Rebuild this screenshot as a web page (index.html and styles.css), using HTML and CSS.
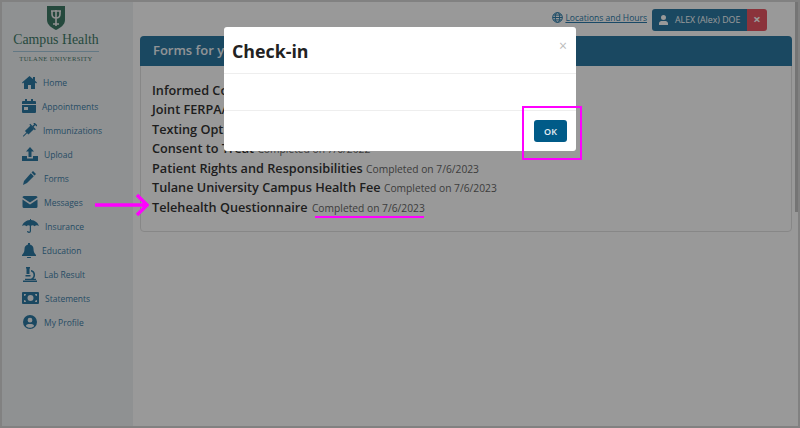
FILE: index.html
```html
<!DOCTYPE html>
<html lang="en">
<head>
    <meta charset="UTF-8">
    <title>Campus Health - Forms</title>
    <link rel="stylesheet" href="styles.css">
</head>
<body>
    <div class="page">
        <aside class="sidebar">
            <div class="logo">
                <svg class="shield" width="20" height="26" viewBox="0 0 20 26">
                    <path d="M1 1h18v14c0 5-5 8-9 10C6 23 1 20 1 15z" fill="#3e7b67"/>
                    <path d="M5 6h10M10 5v16M6 6v3c0 3 2 4 4 4s4-1 4-4V6M7 19h6" fill="none" stroke="#f2f2f2" stroke-width="1.6"/>
                </svg>
                <div class="logo-name">Campus Health</div>
                <div class="logo-sub">TULANE UNIVERSITY</div>
            </div>
            <nav class="menu">
                <a class="menu-item">
                    <svg width="15" height="13" viewBox="0 0 15 13"><path d="M7.5 0L0 6.5l.9 1L2 6.6V13h4V9h3v4h4V6.6l1.1.9.9-1-2-1.8V1h-2v2.1z"/></svg>
                    Home
                </a>
                <a class="menu-item">
                    <svg width="14" height="14" viewBox="0 0 14 14"><path d="M3 0h2v2h4V0h2v2h2a1 1 0 011 1v2H0V3a1 1 0 011-1h2zM0 6h14v7a1 1 0 01-1 1H1a1 1 0 01-1-1zm2 2v3h4V8z"/></svg>
                    Appointments
                </a>
                <a class="menu-item">
                    <svg width="15" height="14" viewBox="0 0 15 14"><g transform="rotate(45 7.5 7)"><rect x="5" y="3" width="5" height="8"/><rect x="3.600" y="2" width="7.800" height="1.300"/><rect x="6.800" y="-1" width="1.400" height="3.500"/><rect x="5" y="-1.800" width="5" height="1.300"/><rect x="7.100" y="10" width=".9" height="6"/></g></svg>
                    Immunizations
                </a>
                <a class="menu-item">
                    <svg width="16" height="14" viewBox="0 0 16 14"><path d="M8 0l4 4.500H9.500V10h-3V4.500H4zM0 9h5v2.500h6V9h5v5H0z"/></svg>
                    Upload
                </a>
                <a class="menu-item">
                    <svg width="16" height="14" viewBox="0 0 16 14"><path d="M11 0l3 3-1.500 1.500-3-3zM8.800 2.200l3 3L5 12l-4 2 1-4z"/></svg>
                    Forms
                </a>
                <a class="menu-item">
                    <svg width="16" height="12" viewBox="0 0 16 12"><path d="M2 0h12a1.500 1.500 0 011.500 1.500L8 6.500.5 1.500A1.500 1.500 0 012 0zM.5 3.500L8 8.500l7.500-5v7A1.500 1.500 0 0114 12H2a1.500 1.500 0 01-1.500-1.500z"/></svg>
                    Messages
                </a>
                <a class="menu-item">
                    <svg width="17" height="14" viewBox="0 0 17 14"><path d="M8 0h1v1c4 .2 7 3 8 6-1.500-1-3-1-4.500.2C11.500 6 10 6 9 6.800V12a2 2 0 01-4 0h1.200a.8.8 0 001.600 0V6.800C7 6 5.500 6 4.500 7.200 3 6 1.500 6 0 7c1-3 4-5.800 8-6z"/></svg>
                    Insurance
                </a>
                <a class="menu-item">
                    <svg width="14" height="15" viewBox="0 0 14 15"><path d="M6 0h2v1.500c2.500.5 3.500 2.500 3.500 4.500 0 3 1 4.500 2.500 6v1H0v-1c1.500-1.500 2.500-3 2.500-6 0-2 1-4 3.500-4.500zM5 14h4a2 2 0 01-4 0z"/></svg>
                    Education
                </a>
                <a class="menu-item">
                    <svg width="16" height="15" viewBox="0 0 16 15"><path d="M4 0h4v1.500H7.500V7h-3V1.500H4zM9 3c3 .5 4.500 3 4 6-.2 1-.7 2-1.500 2.800H14V13H3v-1.200h6c1.500-.8 2.500-2 2.500-3.800 0-1.800-1-3-2.500-3.400zM3.500 8h5v1.500h-5zM1 13.500h14V15H1z"/></svg>
                    Lab Result
                </a>
                <a class="menu-item">
                    <svg width="17" height="12" viewBox="0 0 17 12"><path fill-rule="evenodd" d="M1 0h15a1 1 0 011 1v10a1 1 0 01-1 1H1a1 1 0 01-1-1V1a1 1 0 011-1zm7.500 3a3 3 0 100 6 3 3 0 000-6zM2 2v2a2 2 0 002-2zm11 0a2 2 0 002 2V2zM2 8v2h2a2 2 0 00-2-2zm13 0a2 2 0 00-2 2h2z"/></svg>
                    Statements
                </a>
                <a class="menu-item">
                    <svg width="16" height="14" viewBox="0 0 14 14"><path fill-rule="evenodd" d="M7 0a7 7 0 110 14A7 7 0 017 0zm0 2.800a2.400 2.400 0 100 4.800 2.400 2.400 0 000-4.800zM2.800 11c1 1.200 2.500 1.800 4.200 1.800s3.200-.6 4.200-1.800c-.4-1.200-1.500-2-2.700-2h-3c-1.200 0-2.300.8-2.700 2z"/></svg>
                    My Profile
                </a>
            </nav>
        </aside>

        <main class="content">
            <div class="topbar">
                <a class="locations">
                    <svg width="11" height="11" viewBox="0 0 10 10"><g fill="none" stroke="currentColor" stroke-width=".9"><circle cx="5" cy="5" r="4.400"/><ellipse cx="5" cy="5" rx="2" ry="4.400"/><path d="M.6 5h8.800M1.200 2.800h7.600M1.200 7.200h7.600"/></g></svg>
                    <span>Locations and Hours</span>
                </a>
                <div class="user-group">
                    <div class="user-name">
                        <svg width="9" height="10" viewBox="0 0 9 10"><path d="M4.500 0a2.500 2.500 0 110 5 2.500 2.500 0 010-5zM0 10V8.500C0 7 1.200 6 2.500 6h4C7.800 6 9 7 9 8.500V10z"/></svg>
                        ALEX (Alex) DOE
                    </div>
                    <div class="user-close">&times;</div>
                </div>
            </div>
            <section class="card">
                <h3 class="card-head">Forms for you to complete</h3>
                <div class="card-body">
                    <div class="form-row"><b>Informed Consent</b> <small>Completed on 7/6/2023</small></div>
                    <div class="form-row"><b>Joint FERPA/HIPAA Release</b> <small>Completed on 7/6/2023</small></div>
                    <div class="form-row"><b>Texting Opt In</b> <small>Completed on 7/6/2023</small></div>
                    <div class="form-row"><b>Consent to Treat</b> <small>Completed on 7/6/2022</small></div>
                    <div class="form-row"><b>Patient Rights and Responsibilities</b> <small>Completed on 7/6/2023</small></div>
                    <div class="form-row"><b>Tulane University Campus Health Fee</b> <small>Completed on 7/6/2023</small></div>
                    <div class="form-row"><b>Telehealth Questionnaire</b> <small class="gap">Completed on 7/6/2023</small></div>
                </div>
            </section>
        </main>
    </div>

    <div class="scrollbar"></div>
    <div class="backdrop"></div>

    <div class="modal">
        <div class="modal-head">
            <h2>Check-in</h2>
            <span class="modal-close">&times;</span>
        </div>
        <div class="modal-body"></div>
        <div class="modal-foot">
            <button class="ok-btn">OK</button>
        </div>
    </div>

    <!-- annotations drawn on the screenshot -->
    <div class="mark-box"></div>
    <div class="mark-line"></div>
    <svg class="mark-arrow" width="54" height="24" viewBox="0 0 54 24">
        <path d="M0 12h50M42 2l10 10-10 10" fill="none" stroke="#f0f" stroke-width="3.500"/>
    </svg>
</body>
</html>
```

FILE: styles.css
```css
* {
    margin: 0;
    padding: 0;
    box-sizing: border-box;
}

body {
    width: 800px;
    height: 428px;
    overflow: hidden;
    background: #fff;
    font-family: 'Open Sans', sans-serif;
    color: #333;
    position: relative;
}

.page {
    display: flex;
    height: 428px;
    border: 2px solid #d8d8d8;
}

.sidebar {
    width: 131px;
    flex-shrink: 0;
    background: #eef2f4;
}

.logo {
    display: flex;
    flex-direction: column;
    align-items: center;
    width: 86px;
    height: 66px;
    margin-left: 11px;
    padding-top: 3px;
}

.shield {
    display: block;
}

.logo-name {
    font-family: 'Liberation Serif', serif;
    font-size: 13.8px;
    line-height: 16px;
    color: #3f7a68;
    border-bottom: 1px solid #a6c8dc;
    padding: 0 0 3px;
    margin-top: 1px;
    width: 100%;
    text-align: center;
    white-space: nowrap;
}

.logo-sub {
    font-family: 'Liberation Serif', serif;
    font-size: 6.5px;
    letter-spacing: .4px;
    line-height: 12px;
    margin-top: 1px;
    color: #4c7a6c;
    white-space: nowrap;
}

.menu {
    padding: 2px 0 0 20px;
}

.menu-item {
    display: flex;
    align-items: center;
    gap: 6px;
    height: 24px;
    font-size: 8.5px;
    color: #3f80a8;
}

.menu-item svg {
    fill: #2c78a2;
    flex-shrink: 0;
}

.content {
    flex: 1;
    padding-right: 6px;
    padding-left: 7px;
}

.topbar {
    display: flex;
    justify-content: flex-end;
    align-items: center;
    height: 34px;
    padding: 2px 25px 0 0;
    gap: 5px;
}

.locations {
    display: flex;
    align-items: center;
    gap: 2px;
    font-size: 8.5px;
    color: #2b7baa;
    margin-top: -6px;
}

.locations span {
    text-decoration: underline;
}

.user-group {
    display: flex;
    height: 22px;
    border-radius: 3px;
    overflow: hidden;
    font-size: 8.8px;
    color: #fff;
}

.user-name {
    display: flex;
    align-items: center;
    gap: 7px;
    width: 95px;
    padding-left: 7px;
    background: #2c78a2;
}

.user-name svg {
    fill: #fff;
}

.user-close {
    width: 20px;
    text-align: center;
    line-height: 21px;
    font-size: 13px;
    font-weight: 700;
    background: #e85663;
}

.card {
    height: 196px;
    border: 1px solid #e2e2e2;
    border-radius: 4px;
}

.card-head {
    height: 30px;
    margin: -1px -1px 0;
    padding-left: 13px;
    line-height: 29px;
    font-size: 13px;
    font-weight: 600;
    color: #f0f6fa;
    background: #2c78a2;
    border-radius: 4px 4px 0 0;
}

.card-body {
    padding: 14.5px 11px;
}

.form-row {
    height: 19.5px;
    line-height: 19.5px;
    white-space: nowrap;
    font-size: 12.7px;
}

.form-row b {
    font-weight: 600;
}

.form-row small {
    font-size: 10.25px;
    color: #666;
}

.form-row .gap {
    margin-left: 1px;
}

.scrollbar {
    position: absolute;
    top: 2px;
    right: 2px;
    width: 3px;
    height: 210px;
    background: #c4c4c4;
}

.backdrop {
    position: absolute;
    inset: 0;
    background: rgba(0, 0, 0, .4);
}

.modal {
    position: absolute;
    top: 27px;
    left: 224px;
    width: 352px;
    height: 124px;
    background: #fff;
    border-radius: 3px;
}

.modal-head {
    display: flex;
    justify-content: space-between;
    height: 47px;
    padding: 12px 9px 0 8px;
    border-bottom: 1px solid #eee;
}

.modal-head h2 {
    font-size: 17.8px;
    line-height: 24px;
    font-weight: 700;
    color: #222;
}

.modal-close {
    font-size: 14px;
    line-height: 10px;
    padding-top: 2px;
    color: #bbb;
}

.modal-body {
    height: 37px;
    border-bottom: 1px solid #eee;
}

.modal-foot {
    display: flex;
    justify-content: flex-end;
    padding: 9px 9px 0 0;
}

.ok-btn {
    width: 33px;
    height: 22px;
    border: none;
    border-radius: 3px;
    background: #005b88;
    color: #e8f0f4;
    font-family: 'Open Sans', sans-serif;
    font-size: 9px;
    font-weight: 600;
}

.mark-box {
    position: absolute;
    top: 106px;
    left: 522px;
    width: 60px;
    height: 54px;
    border: 2px solid #f0f;
}

.mark-line {
    position: absolute;
    top: 216px;
    left: 315px;
    width: 109px;
    height: 2px;
    background: #f0f;
}

.mark-arrow {
    position: absolute;
    top: 193px;
    left: 95px;
}
```
